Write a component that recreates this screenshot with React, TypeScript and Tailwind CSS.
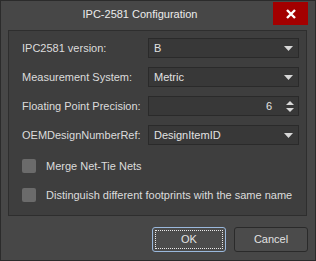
import React from "react";

const font = { fontFamily: '"Liberation Sans", Arial, sans-serif' };

function Arrow() {
  return (
    <svg width="9" height="5" viewBox="0 0 9 5" className="shrink-0">
      <path d="M0 0 H9 L4.5 5 Z" fill="#d8d8d8" />
    </svg>
  );
}

function Select({ value }: { value: string }) {
  return (
    <div className="flex h-[20px] w-[151px] items-center justify-between border border-[#2a2a2a] bg-[#383838] pl-[5px] pr-[5px]">
      <span className="text-[11px] leading-none text-[#e2e2e2]">{value}</span>
      <Arrow />
    </div>
  );
}

function Row({ label, children }: { label: string; children: React.ReactNode }) {
  return (
    <div className="flex h-[20px] items-center">
      <div className="w-[126px] whitespace-nowrap text-[11px] leading-none text-[#dcdcdc]">{label}</div>
      {children}
    </div>
  );
}

function Check({ label }: { label: string }) {
  return (
    <div className="flex h-[14px] items-center">
      <div className="h-[14px] w-[14px] rounded-[2px] bg-[#6b6b6b]" />
      <span className="ml-[10px] whitespace-nowrap text-[11px] leading-none text-[#dcdcdc]">{label}</span>
    </div>
  );
}

export default function App() {
  return (
    <div
      className="flex h-[261px] w-[316px] flex-col border border-[#2b2b2b] bg-[#474747]"
      style={font}
    >
      <div className="flex h-[29px] items-start">
        <div className="flex h-[26px] flex-1 items-center justify-center pl-[6px] text-[11px] text-[#ececec]">
          IPC-2581 Configuration
        </div>
        <div className="mr-[7px] mt-[1px] flex h-[23px] w-[35px] items-center justify-center bg-[#a30000]">
          <svg width="10" height="10" viewBox="0 0 10 10">
            <path d="M1 1 L9 9 M9 1 L1 9" stroke="#ffffff" strokeWidth="2.4" />
          </svg>
        </div>
      </div>
      <div className="ml-[7px] mr-[8px] flex h-[186px] flex-col border border-[#2e2e2e] bg-[#3e3e3e] pl-[13px] pt-[7px]">
        <div className="flex flex-col gap-[9px]">
          <Row label="IPC2581 version:">
            <Select value="B" />
          </Row>
          <Row label="Measurement System:">
            <Select value="Metric" />
          </Row>
          <Row label="Floating Point Precision:">
            <div className="flex h-[20px] w-[151px] items-center justify-end border border-[#2a2a2a] bg-[#383838] pr-[4px]">
              <span className="mr-[14px] text-[11px] leading-none text-[#e2e2e2]">6</span>
              <div className="flex flex-col gap-[3px]">
                <svg width="8" height="4" viewBox="0 0 8 4">
                  <path d="M0 4 H8 L4 0 Z" fill="#d8d8d8" />
                </svg>
                <svg width="8" height="4" viewBox="0 0 8 4">
                  <path d="M0 0 H8 L4 4 Z" fill="#d8d8d8" />
                </svg>
              </div>
            </div>
          </Row>
          <Row label="OEMDesignNumberRef:">
            <Select value="DesignItemID" />
          </Row>
        </div>
        <div className="mt-[14px] flex flex-col gap-[15px]">
          <Check label="Merge Net-Tie Nets" />
          <Check label="Distinguish different footprints with the same name" />
        </div>
      </div>
      <div className="mr-[7px] mt-[11px] flex justify-end gap-[8px]">
        <div className="flex h-[25px] w-[74px] items-center justify-center rounded-[3px] border border-[#9ab8dc] bg-[#4b4b4b] p-[2px]">
          <div className="flex h-full w-full items-center justify-center border border-dotted border-[#e8e8e8] text-[11px] text-[#e2e2e2]">
            OK
          </div>
        </div>
        <div className="flex h-[25px] w-[74px] items-center justify-center rounded-[3px] border border-[#2a2a2a] bg-[#4b4b4b] text-[11px] text-[#e2e2e2]">
          Cancel
        </div>
      </div>
    </div>
  );
}
